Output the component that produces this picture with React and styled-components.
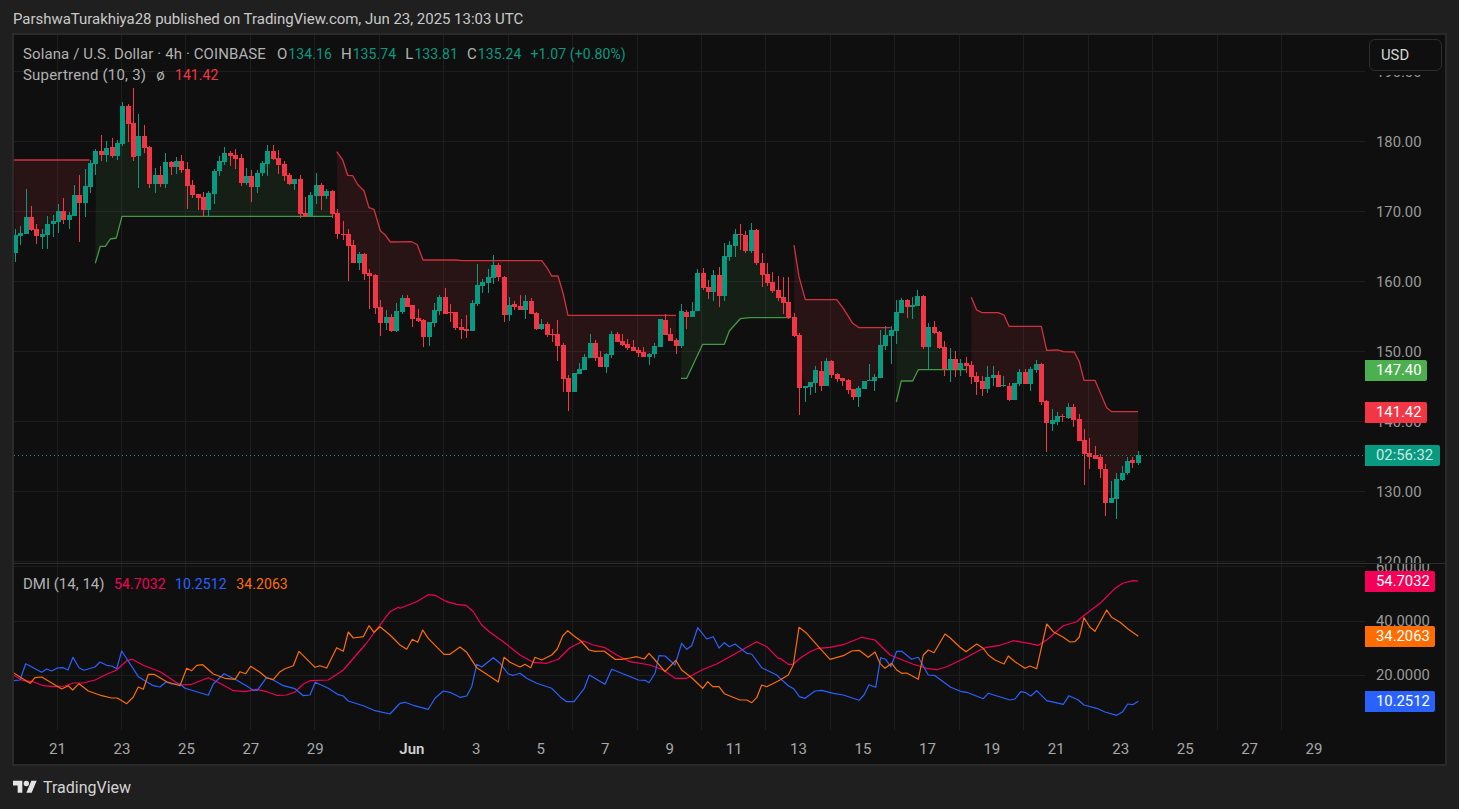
import React from 'react'
import styled, { createGlobalStyle } from 'styled-components'

const GlobalStyle = createGlobalStyle`
  html, body { margin: 0; padding: 0; background: #1f1f1f; overflow: hidden; }
  body { font-family: Roboto, "Liberation Sans", sans-serif; }
`

const GREEN = '#089981'
const RED = '#f23645'
const SUPER_GREEN = '#4caf50'
const DI_PLUS = '#f50057'
const DI_MINUS = '#2962ff'
const ADX = '#ff6d00'

// candles: [up, bodyTop, bodyBottom, wickTop, wickBottom], read off 3x crops, y0 is the crop's origin
const blockA = [
  [1,405,458,387,485],[1,399,408,378,435],[1,351,402,267,402],[0,351,390,318,393],[0,387,408,372,432],[1,402,411,387,447],
  [1,372,405,348,447],[1,363,372,345,411],[1,333,366,312,399],[0,333,360,294,372],[1,345,360,336,387],[1,285,348,255,348],
  [0,285,309,225,426],[1,258,309,207,351],[1,189,261,180,279],[1,153,192,147,225],[0,153,165,105,183],[1,144,165,123,186],
  [0,141,168,114,174],[1,129,168,120,180],[1,18,132,6,138],[0,18,72,12,126],[0,69,171,-36,183],[1,108,168,42,264],
  [0,108,144,75,159],[0,141,252,138,264],[1,225,252,204,279],[0,225,252,198,261],[1,186,252,159,264],[0,186,201,183,225],
  [1,183,201,171,222],[0,183,210,165,219],[0,207,258,186,327],[0,255,285,240,294],[0,282,294,282,330],[0,291,330,276,351],
  [1,279,330,273,351],[1,213,282,207,312],[1,183,213,168,228],[1,159,186,141,195],[0,159,168,153,198],[0,165,177,147,207],
  [0,174,249,162,258],[1,228,249,204,255],[0,228,261,210,306],[1,219,261,210,279],[1,189,219,183,228],[1,153,192,135,228],
  [0,153,177,135,180],[0,174,195,150,222],[0,192,228,183,243],[0,225,252,219,255],[1,237,252,237,270],[0,237,342,225,354],
  [0,339,348,291,351],[1,285,348,276,351],[1,255,288,219,312],[0,255,288,249,330],[1,273,288,267,297],[0,273,342,270,354],
]
const blockB = [
  [0,219,282,207,297],[0,282,285,243,300],[0,282,318,267,423],[0,315,369,300,369],[1,342,369,336,390],[0,342,402,339,420],
  [0,399,408,387,507],[0,405,504,402,522],[0,501,549,480,588],[1,531,549,510,570],[0,531,573,522,576],[1,513,573,489,576],
  [1,474,516,465,522],[0,474,501,465,501],[0,495,537,495,561],[0,534,543,507,546],[0,540,591,537,621],[1,546,591,546,618],
  [1,510,549,489,561],[1,471,513,465,525],[0,471,522,444,522],[0,516,519,492,546],[0,516,564,516,570],[0,561,570,537,597],
  [0,567,573,525,594],[1,489,573,480,573],[1,435,492,372,498],[1,426,438,417,459],[1,411,429,387,459],[1,375,414,345,432],
  [0,375,411,369,423],[0,411,525,408,546],[1,495,525,471,543],[0,492,501,483,510],[0,498,510,465,510],[1,483,510,465,537],
  [0,483,522,474,522],[0,519,567,516,570],[1,552,567,537,570],[0,552,585,546,591],[0,582,585,567,606],[0,582,618,540,663],
  [0,615,717,609,756],[0,714,756,705,813],[1,699,756,699,756],[1,687,702,669,702],[1,651,690,642,690],[1,609,654,582,654],
  [0,609,654,600,663],[0,651,681,633,681],[1,642,681,639,699],[1,582,645,573,654],[0,582,606,576,606],[0,603,615,582,618],
  [0,612,624,597,630],[0,621,633,600,633],[0,630,639,621,651],[0,636,651,621,651],[1,642,651,639,675],[1,618,642,609,654],
  [1,537,621,537,621],[0,540,585,522,585],[0,582,603,564,603],[0,600,618,594,642],[1,513,618,492,624],[0,516,531,510,567],
]
const blockC = [
  [1,273,291,246,291],[1,159,273,148,273],[0,159,204,144,210],[0,201,216,180,237],[1,165,216,150,243],[0,165,228,141,261],
  [1,108,228,69,243],[1,75,111,63,123],[1,42,78,27,111],[0,42,45,12,90],[0,45,93,33,99],[1,30,93,9,99],
  [0,30,129,27,135],[0,129,165,99,201],[0,162,189,129,198],[0,186,213,156,219],[0,210,234,168,243],[0,231,249,171,282],
  [0,246,294,171,297],[0,291,348,279,351],[0,345,504,339,585],[1,498,504,498,546],[1,486,501,486,525],[1,450,489,438,519],
  [0,453,498,423,513],[1,423,498,414,498],[0,423,465,420,474],[0,462,477,459,486],[0,474,483,474,498],[0,480,510,477,522],
  [0,507,531,507,540],[1,504,531,498,561],[1,483,507,483,507],[1,480,483,432,483],[1,471,483,462,513],[1,375,474,330,474],
  [1,345,378,318,390],[1,330,348,318,432],[1,276,333,240,372],[1,240,279,234,279],[0,240,261,237,294],[1,255,261,231,297],
  [1,228,258,210,258],[0,228,381,225,387],[1,321,381,309,447],[0,321,339,303,342],[0,336,384,333,387],[0,381,447,363,468],
  [1,417,447,384,486],[0,417,447,393,471],[1,429,447,417,468],[0,429,438,411,459],[0,435,471,423,492],[0,468,486,456,525],
]
const blockD = [
  [0,303,327,288,348],[1,291,327,258,339],[1,285,294,258,318],[0,285,321,273,321],[1,315,318,288,321],[0,318,360,309,363],
  [1,309,360,309,360],[1,276,312,267,318],[0,276,312,267,312],[1,267,312,261,333],[1,252,270,240,279],[0,252,366,249,375],
  [0,363,429,360,516],[1,420,432,387,453],[1,408,426,396,435],[0,408,411,402,426],[1,381,414,369,417],[0,381,420,372,441],
  [0,417,483,402,483],[0,480,522,447,615],[0,519,531,474,567],[0,525,537,498,537],[0,531,567,522,594],[0,567,669,552,708],
  [1,654,669,603,669],[1,597,657,579,717],[1,579,600,558,603],[1,543,579,531,585],[0,540,549,531,564],[1,525,549,513,555],
]

const toCandles = (rows, y0) =>
  rows.map(([up, top, bottom, high, low]) => ({
    up: !!up,
    top: y0 + top / 3,
    bottom: y0 + bottom / 3,
    high: y0 + high / 3,
    low: y0 + low / 3,
  }))

const candles = [
  ...toCandles(blockA, 100),
  ...toCandles(blockB, 140),
  ...toCandles(blockC, 220),
  ...toCandles(blockD, 280),
]

const candleX = (n) => 15.4 + (n - 1) * 5.372

// polylines read off the crops: flat [x, y, x, y...] in crop pixels
const fromCrop = (x0, y0, flat) => {
  const out = []
  for (let i = 0; i < flat.length; i += 2) out.push([x0 + flat[i] / 3, y0 + flat[i + 1] / 3])
  return out
}

const supertrend = [
  { up: false, from: 1, to: 15, line: [[14, 160], [89.5, 160]] },
  { up: true, from: 16, to: 60, line: fromCrop(0, 100, [286,490,301,439,316,439,331,417,349,414,366,349,997,349]) },
  { up: false, from: 61, to: 124, line: fromCrop(330, 140, [20,35,38,60,53,106,68,107,84,135,102,152,117,203,132,208,151,272,166,285,181,306,245,305,262,314,279,360,380,360,395,362,635,362,650,382,665,408,684,408,700,462,714,526,1038,526]) },
  { up: true, from: 125, to: 145, line: fromCrop(660, 220, [63,475,80,475,128,373,193,373,208,333,241,296,270,293,390,293]) },
  { up: false, from: 146, to: 164, line: fromCrop(660, 220, [402,75,417,170,436,239,530,239,550,265,578,310,597,323,692,323]) },
  { up: true, from: 165, to: 178, line: fromCrop(660, 220, [709,546,724,483,758,483,775,449,918,449]) },
  { up: false, from: 179, to: 210, line: fromCrop(960, 280, [34,52,50,90,66,98,115,98,132,105,147,139,244,139,260,211,295,210,310,215,343,216,358,245,372,301,405,301,440,383,455,395,534,395]) },
]

const diPlus = [
  ...fromCrop(0, 560, [40,345,70,362,100,365,130,377,160,380,195,378,220,369,250,369,285,360,320,343,350,330,380,302,397,298,430,316,480,335,510,355,540,375,575,373,625,353,660,370,700,392,735,395,770,388,800,395,830,406,860,405,885,396,910,372,930,362,985,360,1030,330,1095,255,1170,155,1195,142]),
  ...fromCrop(400, 570, [0,115,50,95,85,74,105,76,140,95,170,103,198,106,220,125,245,165,270,187,310,215,360,255,400,277,440,280,475,268,510,233,550,213,580,225,615,233,650,255,690,275,750,285,790,300,825,325,860,325,910,298,950,282,1070,215,1100,230,1135,265]),
  ...fromCrop(780, 570, [0,265,25,283,40,283,60,265,90,245,115,235,150,232,190,224,245,202,285,210,330,255,400,283,440,295,470,299,500,290,560,262,600,240,620,232,660,226,700,212,750,221,775,226,800,210,850,167,890,155,910,138,960,100,1005,55,1030,39,1060,32,1075,33]),
]

const diMinus = [
  ...fromCrop(0, 560, [40,362,60,360,77,311,125,337,140,327,155,333,172,324,190,323,204,330,219,292,237,323,252,331,285,321,300,306,320,316,335,318,350,326,365,273,415,350,460,377,480,381,498,366,515,372,540,372,555,385,625,406,640,372,672,341,705,358,740,378,760,391,772,391,800,352,820,360,850,377,885,386,910,407,930,405,946,367,985,385,1015,404,1030,408,1045,423,1090,437,1125,452,1170,462,1195,435]),
  ...fromCrop(400, 570, [0,400,15,397,40,406,85,418,105,385,130,363,150,367,180,382,200,378,215,350,230,283,245,291,280,263,300,280,325,312,340,316,360,310,380,325,410,340,455,355,480,380,500,395,522,395,553,355,568,315,615,343,635,298,680,316,715,330,735,331,747,338,765,310,777,257,795,258,825,285,845,220,860,238,875,227,893,173,920,207,940,200,957,234,973,218,988,230,1005,222,1040,250,1055,252,1085,293,1130,315]),
  ...fromCrop(780, 570, [0,325,25,347,42,357,58,380,75,385,105,363,125,361,160,370,190,375,237,391,252,375,267,344,287,352,302,263,317,268,332,290,350,244,365,244,395,268,415,262,445,315,465,317,512,352,545,365,560,367,610,386,625,370,690,390,705,387,722,365,735,367,752,378,770,362,800,392,850,403,867,377,895,390,912,405,950,415,975,426,1010,436,1028,425,1043,402,1058,404,1075,394]),
]

const adx = [
  ...fromCrop(0, 560, [40,338,90,370,105,353,125,351,185,387,205,377,218,390,237,371,265,393,305,407,335,414,352,414,380,431,400,411,415,381,430,388,445,343,462,343,500,365,540,377,560,325,575,332,590,316,608,314,640,342,675,355,705,358,720,335,737,341,752,319,780,337,800,354,820,359,840,335,855,326,880,317,897,274,945,322,960,317,980,324,1010,263,1030,274,1045,216,1060,234,1090,230,1107,197,1122,217,1140,200,1170,225]),
  ...fromCrop(400, 570, [0,225,20,238,37,208,53,217,68,180,85,205,132,253,150,253,180,231,200,247,230,293,260,313,295,336,312,262,330,277,360,291,375,283,392,293,405,262,425,270,455,255,472,237,488,198,503,182,525,200,543,213,567,240,585,244,612,243,645,268,665,268,690,264,710,260,733,267,747,250,765,270,795,305,827,271,845,300,875,323,908,355,923,335,938,350,957,350,973,371,1020,390,1040,390,1055,398,1070,383,1085,345,1100,350,1130,335]),
  ...fromCrop(780, 570, [0,330,25,315,40,285,57,172,80,190,120,235,150,268,190,257,215,243,237,241,265,262,285,246,300,280,315,295,335,280,350,300,365,310,380,309,415,328,430,255,445,240,462,248,495,192,510,203,540,232,558,245,590,222,610,235,625,255,645,270,672,282,685,258,705,275,735,295,750,288,770,296,800,162,820,185,850,202,870,216,885,215,898,201,912,143,930,172,945,184,980,120,995,142,1020,157,1045,178,1075,199]),
]

const toPoints = (pts) => pts.map(([x, y]) => `${x.toFixed(1)},${y.toFixed(1)}`).join(' ')

const verticals = Array.from({ length: 20 }, (_, i) => i).map((i) => {
  const x = 57.5 + i * 64.45
  return Math.round(x) - 0.5
})
const priceLevels = [71.5, 141.5, 211.5, 281.5, 351.5, 421.5, 491.5, 561.5]
const dmiLevels = [566.5, 621.5, 675.5]

const priceTicks = ['190.00', '180.00', '170.00', '160.00', '150.00', '140.00', '130.00', '120.00']
const dmiTicks = ['60.0000', '40.0000', '20.0000']
const timeTicks = ['21', '23', '25', '27', '29', null, 'Jun', '3', '5', '7', '9', '11', '13', '15', '17', '19', '21', '23', '25', '27', '29']

const Page = styled.div`
  width: 1459px;
  height: 809px;
  display: flex;
  flex-direction: column;
  background: #1f1f1f;
  overflow: hidden;
`
const Header = styled.div`
  height: 33px;
  padding: 11px 0 0 13px;
  box-sizing: border-box;
  color: #c9c9c9;
  font-size: 15px;
  letter-spacing: -0.03px;
  line-height: 16px;
`
const Frame = styled.div`
  width: 1431px;
  margin-left: 12px;
  display: flex;
  flex-direction: column;
  border: 2px solid #2a2a2a;
  background: #0f0f0f;
`
const Pane = styled.div`
  position: relative;
  height: ${(p) => p.$height}px;
  display: grid;
  grid-template-columns: 1351px 80px;
  grid-template-rows: ${(p) => p.$height}px;
  overflow: hidden;
`
const Divider = styled.div`
  height: 1px;
  background: #2e2e2e;
`
const Plot = styled.svg`
  display: block;
  width: 1351px;
  height: 100%;
`
const Scale = styled.div`
  display: flex;
  flex-direction: column;
  padding: ${(p) => p.$offset}px 0 0 11px;
`
const ScaleTick = styled.div`
  height: ${(p) => p.$step}px;
  flex: none;
  color: #9a9a9a;
  font-size: 14.8px;
  line-height: ${(p) => p.$step}px;
`
const DmiScale = styled(Scale)`
  margin-top: -24px;
`
const Legend = styled.div`
  position: absolute;
  left: 9px;
  top: ${(p) => p.$top}px;
  display: flex;
  flex-direction: column;
  gap: 5px;
  color: #b2b2b2;
  font-size: 15px;
  line-height: 16px;
`
const LegendRow = styled.div`
  display: flex;
  align-items: baseline;
  gap: ${(p) => p.$gap || 10}px;
  letter-spacing: ${(p) => p.$spacing || 0}px;
`
const Value = styled.span`
  color: ${(p) => p.$color};
  font-size: 14px;
  letter-spacing: 0.1px;
`
const Symbol = styled.span`
  margin-right: 1px;
`
const PriceBadge = styled.div`
  position: absolute;
  left: 1351px;
  top: ${(p) => p.$top}px;
  width: ${(p) => p.$width}px;
  height: 21px;
  box-sizing: border-box;
  padding-left: 11px;
  background: ${(p) => p.$color};
  border-radius: 0 2px 2px 0;
  color: ${(p) => p.$text || '#ffffff'};
  font-size: 14.8px;
  line-height: 21px;
`
const CurrencyButton = styled.div`
  position: absolute;
  left: 1355px;
  top: 4px;
  width: 73px;
  height: 32px;
  box-sizing: border-box;
  padding-left: 11px;
  background: #0f0f0f;
  border: 1px solid #2e2e2e;
  border-radius: 6px;
  box-shadow: 0 4px 0 #0f0f0f;
  color: #d6d6d6;
  font-size: 14.8px;
  line-height: 31px;
`
const TimeAxis = styled.div`
  height: 31px;
  display: flex;
  padding-left: 11.3px;
  align-items: center;
`
const TimeTick = styled.div`
  flex: none;
  width: ${(p) => (p.$spacer ? 32.2 : 64.45)}px;
  text-align: center;
  color: ${(p) => (p.$strong ? '#d1d1d1' : '#a8a8a8')};
  font-size: 15px;
  font-weight: ${(p) => (p.$strong ? 600 : 400)};
`
const Footer = styled.div`
  flex: 1;
  display: flex;
  align-items: center;
  gap: 6px;
  padding-left: 13px;
  color: #d4d4d4;
  font-size: 16px;
`

function Grid({ horizontals, bottom }) {
  return (
    <g stroke="#1e1e1e" strokeWidth="1">
      {horizontals.map((y) => <line key={y} x1="14" x2="1365" y1={y} y2={y} />)}
      {verticals.map((x) => <line key={x} x1={x} x2={x} y1="30" y2={bottom} />)}
    </g>
  )
}

function Candle({ data, n }) {
  const left = Math.round(candleX(n) - 2.5)
  const color = data.up ? GREEN : RED
  return (
    <g fill={color} shapeRendering="crispEdges">
      <rect x={left + 2} width="1" y={data.high} height={data.low - data.high} />
      <rect x={left} width="5" y={data.top} height={Math.max(data.bottom - data.top, 1)} />
    </g>
  )
}

function SupertrendBand({ band }) {
  const mids = []
  for (let n = band.from; n <= band.to; n++) {
    const c = candles[n - 1]
    mids.push([candleX(n), (c.top + c.bottom) / 2])
  }
  const first = band.line[0][0]
  const last = band.line[band.line.length - 1][0]
  const lower = mids
    .filter(([x]) => x >= first - 1.5 && x <= last + 1.5)
    .reverse()
  const fill = band.up ? 'rgba(76,175,80,0.1)' : 'rgba(242,54,69,0.11)'
  const stroke = band.up ? SUPER_GREEN : RED
  return (
    <g>
      <polygon points={toPoints([...band.line, ...lower])} fill={fill} />
      <polyline points={toPoints(band.line)} fill="none" stroke={stroke} strokeOpacity="0.85" strokeWidth="1.3" strokeLinejoin="round" />
    </g>
  )
}

function TvLogo() {
  return (
    <svg width="24" height="19" viewBox="0 0 36 28" fill="#e4e4e4">
      <path d="M14 22H7V11H0V4h14v18zM28 22h-8l7.5-18h8L28 22z" />
      <circle cx="20" cy="8" r="4" />
    </svg>
  )
}

export default function App() {
  return (
    <Page>
      <GlobalStyle />
      <Header>ParshwaTurakhiya28 published on TradingView.com, Jun 23, 2025 13:03 UTC</Header>
      <Frame>
        <Pane $height={528}>
          <Plot viewBox="14 35 1351 528">
            <Grid horizontals={priceLevels} bottom={563} />
            {supertrend.map((band) => <SupertrendBand key={band.from} band={band} />)}
            {candles.map((c, i) => <Candle key={i} data={c} n={i + 1} />)}
            <line x1="14" x2="1365" y1="455.5" y2="455.5" stroke={GREEN} strokeWidth="1" strokeDasharray="1 3" />
          </Plot>
          <Scale $offset={1.5}>
            {priceTicks.map((t) => <ScaleTick key={t} $step={70}>{t}</ScaleTick>)}
          </Scale>
          <CurrencyButton>USD</CurrencyButton>
          <PriceBadge $top={325} $width={62} $color={SUPER_GREEN}>147.40</PriceBadge>
          <PriceBadge $top={367} $width={62} $color={RED}>141.42</PriceBadge>
          <PriceBadge $top={410} $width={75} $color="#089981" $text="#c9ebe4">02:56:32</PriceBadge>
          <Legend $top={11}>
            <LegendRow $gap={11} $spacing={0.1}>
              <span>Solana / U.S. Dollar · 4h · COINBASE</span>
              <LegendRow $gap={9}>
                <span><Symbol>O</Symbol><Value $color={GREEN}>134.16</Value></span>
                <span><Symbol>H</Symbol><Value $color={GREEN}>135.74</Value></span>
                <span><Symbol>L</Symbol><Value $color={GREEN}>133.81</Value></span>
                <span><Symbol>C</Symbol><Value $color={GREEN}>135.24</Value></span>
                <Value $color={GREEN}>+1.07 (+0.80%)</Value>
              </LegendRow>
            </LegendRow>
            <LegendRow $spacing={0.2}>
              <span>Supertrend (10, 3)</span>
              <span>ø</span>
              <Value $color={RED}>141.42</Value>
            </LegendRow>
          </Legend>
        </Pane>
        <Divider />
        <Pane $height={169}>
          <Plot viewBox="14 564 1351 169">
            <Grid horizontals={dmiLevels} bottom={730} />
            <polyline points={toPoints(diPlus)} fill="none" stroke={DI_PLUS} strokeWidth="1.2" strokeLinejoin="round" />
            <polyline points={toPoints(diMinus)} fill="none" stroke={DI_MINUS} strokeWidth="1.2" strokeLinejoin="round" />
            <polyline points={toPoints(adx)} fill="none" stroke={ADX} strokeWidth="1.2" strokeLinejoin="round" />
          </Plot>
          <DmiScale $offset={0}>
            {dmiTicks.map((t) => <ScaleTick key={t} $step={54}>{t}</ScaleTick>)}
          </DmiScale>
          <PriceBadge $top={7} $width={70} $color={DI_PLUS}>54.7032</PriceBadge>
          <PriceBadge $top={62} $width={70} $color={ADX}>34.2063</PriceBadge>
          <PriceBadge $top={127} $width={70} $color={DI_MINUS}>10.2512</PriceBadge>
          <Legend $top={12}>
            <LegendRow $gap={9.5}>
              <span>DMI (14, 14)</span>
              <Value $color={DI_PLUS}>54.7032</Value>
              <Value $color={DI_MINUS}>10.2512</Value>
              <Value $color={ADX}>34.2063</Value>
            </LegendRow>
          </Legend>
        </Pane>
        <TimeAxis>
          {timeTicks.map((t, i) =>
            t === null
              ? <TimeTick key={i} $spacer />
              : <TimeTick key={i} $strong={t === 'Jun'}>{t}</TimeTick>
          )}
        </TimeAxis>
      </Frame>
      <Footer>
        <TvLogo />
        <span>TradingView</span>
      </Footer>
    </Page>
  )
}
